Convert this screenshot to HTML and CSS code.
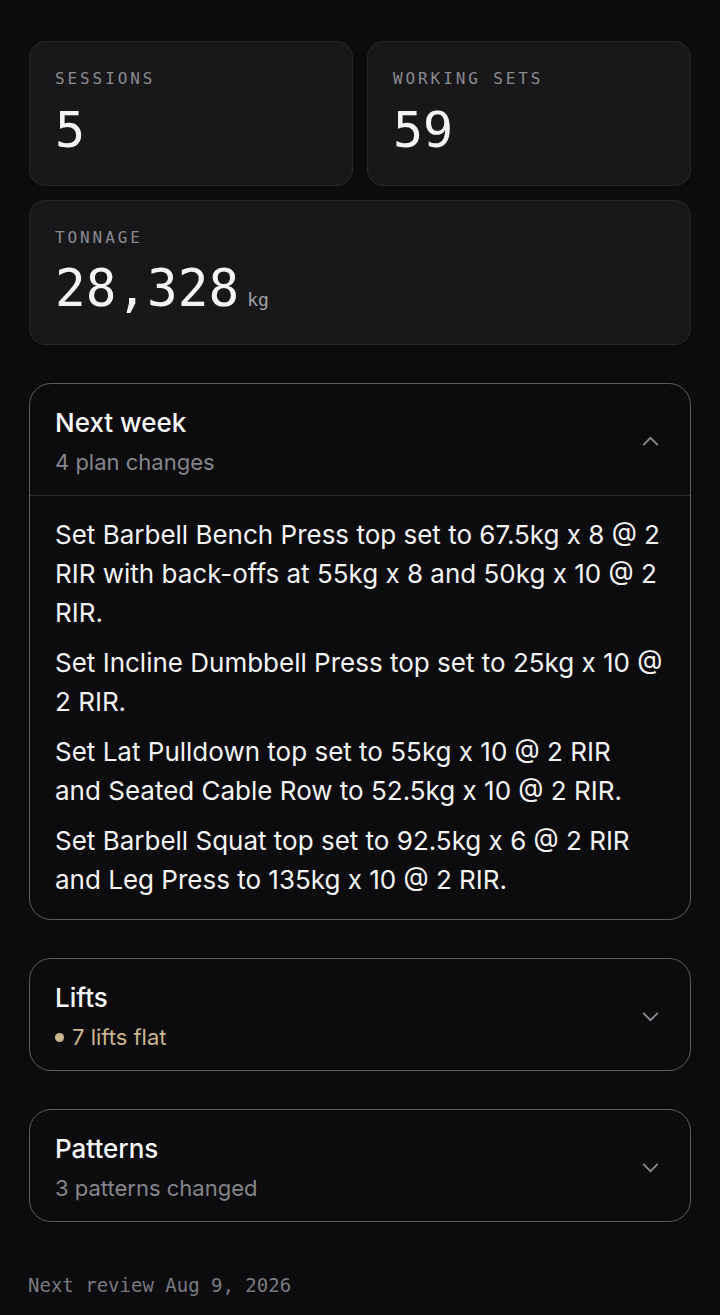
FILE: index.html
```html
<!DOCTYPE html>
<html lang="en">
<head>
  <meta charset="UTF-8">
  <meta name="viewport" content="width=device-width, initial-scale=1.0">
  <title>Weekly Review</title>
  <link rel="stylesheet" href="styles.css">
</head>
<body>

<div class="page">
  <div class="stats">
    <div class="stat">
      <div class="stat-label">Sessions</div>
      <div class="stat-value">5</div>
    </div>
    <div class="stat">
      <div class="stat-label">Working sets</div>
      <div class="stat-value">59</div>
    </div>
    <div class="stat stat-wide">
      <div class="stat-label">Tonnage</div>
      <div class="stat-value stat-big">28,328<span class="unit">kg</span></div>
    </div>
  </div>

  <div class="panel">
    <div class="panel-head">
      <div>
        <div class="panel-title">Next week</div>
        <div class="panel-sub">4 plan changes</div>
      </div>
      <svg class="chevron" viewBox="0 0 20 12"><path d="M2 10 L10 2 L18 10"/></svg>
    </div>
    <div class="panel-body">
      <p>Set Barbell Bench Press top set to 67.5kg x 8 @ 2 RIR with back-offs at 55kg x 8 and 50kg x 10 @ 2 RIR.</p>
      <p>Set Incline Dumbbell Press top set to 25kg x 10 @ 2 RIR.</p>
      <p>Set Lat Pulldown top set to 55kg x 10 @ 2 RIR and&nbsp;Seated Cable Row to 52.5kg x 10 @ 2 RIR.</p>
      <p>Set Barbell Squat top set to 92.5kg x 6 @ 2 RIR and Leg Press to 135kg x 10 @ 2 RIR.</p>
    </div>
  </div>

  <div class="panel">
    <div class="panel-head">
      <div>
        <div class="panel-title">Lifts</div>
        <div class="panel-sub flat"><span class="dot"></span>7 lifts flat</div>
      </div>
      <svg class="chevron" viewBox="0 0 20 12"><path d="M2 2 L10 10 L18 2"/></svg>
    </div>
  </div>

  <div class="panel">
    <div class="panel-head">
      <div>
        <div class="panel-title">Patterns</div>
        <div class="panel-sub">3 patterns changed</div>
      </div>
      <svg class="chevron" viewBox="0 0 20 12"><path d="M2 2 L10 10 L18 2"/></svg>
    </div>
  </div>

  <div class="footer">Next review Aug 9, 2026</div>
</div>

</body>
</html>
```

FILE: styles.css
```css
body {
  background-color: #0c0c0e;
  color: #f4f4f5;
  font-family: Inter, "Noto Sans", sans-serif;
  margin: 0;
  padding: 0;
}
.page {
  padding: 41px 28px 0 28px;
  display: flex;
  flex-direction: column;
}
.stats {
  display: grid;
  grid-template-columns: 1fr 1fr;
  gap: 14px;
  margin: 0 1px;
}
.stat {
  background-color: #18181b;
  border: 1px solid #27272a;
  border-radius: 16px;
  padding: 27px 25px 25px 25px;
  height: 145px;
  box-sizing: border-box;
}
.stat-wide {
  grid-column: span 2;
}
.stat-label {
  font-family: "DejaVu Sans Mono", monospace;
  font-size: 16px;
  letter-spacing: 2.9px;
  text-transform: uppercase;
  color: #8b8b90;
  line-height: 20px;
}
.stat-value {
  font-family: "DejaVu Sans Mono", monospace;
  font-size: 50px;
  line-height: 60px;
  margin-top: 11px;
  color: #f4f4f5;
}
.stat-big {
  font-size: 51px;
}
.unit {
  font-size: 18px;
  color: #a1a1a6;
  margin-left: 8px;
}
.panel {
  border: 1.5px solid #5c5c60;
  border-radius: 22px;
  margin: 38px 1px 0 1px;
  overflow: hidden;
}
.panel-head {
  display: flex;
  align-items: center;
  justify-content: space-between;
  padding: 22px 30px 18px 25px;
}
.panel-title {
  font-size: 26px;
  font-weight: 500;
  line-height: 34px;
  color: #fafafa;
}
.panel-sub {
  font-size: 22px;
  line-height: 30px;
  margin-top: 7px;
  color: #85858b;
}
.panel-sub.flat {
  color: #cbb78e;
  display: flex;
  align-items: center;
}
.dot {
  width: 9px;
  height: 9px;
  border-radius: 50%;
  background-color: #cbb78e;
  margin-right: 8px;
}
.chevron {
  width: 19px;
  height: 11px;
  fill: none;
  stroke: #8b8b90;
  stroke-width: 2;
}
.panel-body {
  border-top: 1px solid #2a2a2d;
  padding: 19px 22px 20px 25px;
}
.panel-body p {
  font-size: 26px;
  line-height: 39px;
  margin: 0 0 11px 0;
}
.panel-body p:last-child {
  margin-bottom: 0;
}
.footer {
  font-family: "DejaVu Sans Mono", monospace;
  font-size: 19px;
  color: #7a7a80;
  margin-top: 52px;
  padding-bottom: 20px;
}
```
